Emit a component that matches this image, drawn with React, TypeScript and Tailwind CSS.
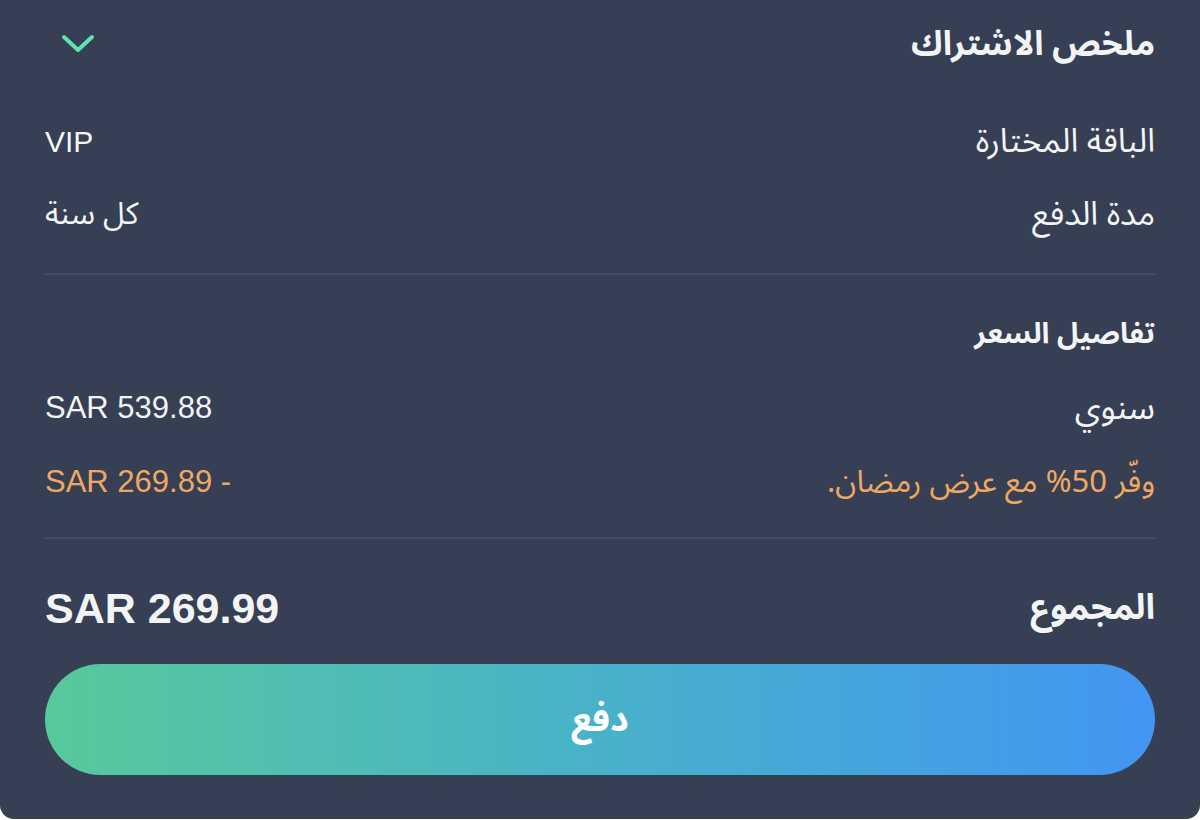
import React from "react";

const AR = "font-['Noto_Sans_Arabic','Noto_Sans','DejaVu_Sans',sans-serif]";
const LAT = "font-['Liberation_Sans','Arial',sans-serif]";

export default function App() {
  return (
    <div className="min-h-[820px] w-[1200px] bg-white">
      <div dir="rtl" className="flex w-[1200px] flex-col rounded-b-[14px] bg-[#363f53] px-[45px] pb-[44px]">
        <div className="flex h-[88px] items-center justify-between">
          <span className={`${AR} text-[34px] font-bold text-[#f3f4f6]`}>ملخص الاشتراك</span>
          <svg width="34" height="20" viewBox="0 0 34 20" className="ml-[16px]" fill="none">
            <path d="M3 3 L17 16 L31 3" stroke="#5fe3ad" strokeWidth="4" strokeLinecap="round" strokeLinejoin="round" />
          </svg>
        </div>
        <div className="mt-[17px]">
          <div className="flex h-[73px] items-center justify-between">
            <span className={`${AR} text-[33px] text-[#f3f4f6]`}>الباقة المختارة</span>
            <span dir="ltr" className={`${LAT} text-[30px] text-[#f3f4f6]`}>VIP</span>
          </div>
          <div className="flex h-[73px] items-center justify-between">
            <span className={`${AR} text-[33px] text-[#f3f4f6]`}>مدة الدفع</span>
            <span className={`${AR} text-[31px] text-[#f3f4f6]`}>كل سنة</span>
          </div>
        </div>
        <div className="mt-[22px] h-[2px] bg-[#434c60]" />
        <div className="mt-[22px] flex h-[74px] items-center">
          <span className={`${AR} text-[29px] font-bold text-[#f3f4f6]`}>تفاصيل السعر</span>
        </div>
        <div className="flex h-[74px] items-center justify-between">
          <span className={`${AR} text-[34px] text-[#f3f4f6]`}>سنوي</span>
          <span dir="ltr" className={`${LAT} text-[31px] text-[#f3f4f6]`}>SAR 539.88</span>
        </div>
        <div className="flex h-[74px] items-center justify-between">
          <span className={`${AR} text-[31px] text-[#eea864]`}>وفّر 50% مع عرض رمضان.</span>
          <span dir="ltr" className={`${LAT} text-[31px] text-[#eea864]`}>SAR 269.89 -</span>
        </div>
        <div className="mt-[18px] h-[2px] bg-[#434c60]" />
        <div className="mt-[32px] flex h-[74px] items-center justify-between">
          <span className={`${AR} text-[35px] font-bold text-[#f3f4f6]`}>المجموع</span>
          <span dir="ltr" className={`${LAT} text-[43px] font-bold text-[#f3f4f6]`}>SAR 269.99</span>
        </div>
        <button className="mt-[19px] flex h-[111px] items-center justify-center rounded-full bg-gradient-to-r from-[#58c99a] to-[#4395f2]">
          <span className={`${AR} text-[36px] font-bold text-white`}>دفع</span>
        </button>
      </div>
    </div>
  );
}
